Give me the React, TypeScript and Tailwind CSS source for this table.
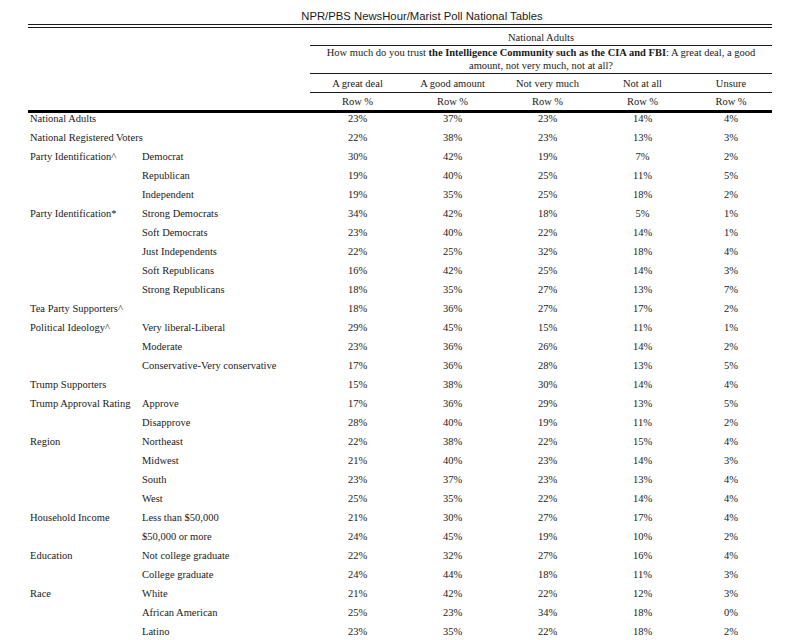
const cols = ["A great deal", "A good amount", "Not very much", "Not at all", "Unsure"];

const rows: [string, string, string[]][] = [
  ["National Adults", "", ["23%", "37%", "23%", "14%", "4%"]],
  ["National Registered Voters", "", ["22%", "38%", "23%", "13%", "3%"]],
  ["Party Identification^", "Democrat", ["30%", "42%", "19%", "7%", "2%"]],
  ["", "Republican", ["19%", "40%", "25%", "11%", "5%"]],
  ["", "Independent", ["19%", "35%", "25%", "18%", "2%"]],
  ["Party Identification*", "Strong Democrats", ["34%", "42%", "18%", "5%", "1%"]],
  ["", "Soft Democrats", ["23%", "40%", "22%", "14%", "1%"]],
  ["", "Just Independents", ["22%", "25%", "32%", "18%", "4%"]],
  ["", "Soft Republicans", ["16%", "42%", "25%", "14%", "3%"]],
  ["", "Strong Republicans", ["18%", "35%", "27%", "13%", "7%"]],
  ["Tea Party Supporters^", "", ["18%", "36%", "27%", "17%", "2%"]],
  ["Political Ideology^", "Very liberal-Liberal", ["29%", "45%", "15%", "11%", "1%"]],
  ["", "Moderate", ["23%", "36%", "26%", "14%", "2%"]],
  ["", "Conservative-Very conservative", ["17%", "36%", "28%", "13%", "5%"]],
  ["Trump Supporters", "", ["15%", "38%", "30%", "14%", "4%"]],
  ["Trump Approval Rating", "Approve", ["17%", "36%", "29%", "13%", "5%"]],
  ["", "Disapprove", ["28%", "40%", "19%", "11%", "2%"]],
  ["Region", "Northeast", ["22%", "38%", "22%", "15%", "4%"]],
  ["", "Midwest", ["21%", "40%", "23%", "14%", "3%"]],
  ["", "South", ["23%", "37%", "23%", "13%", "4%"]],
  ["", "West", ["25%", "35%", "22%", "14%", "4%"]],
  ["Household Income", "Less than $50,000", ["21%", "30%", "27%", "17%", "4%"]],
  ["", "$50,000 or more", ["24%", "45%", "19%", "10%", "2%"]],
  ["Education", "Not college graduate", ["22%", "32%", "27%", "16%", "4%"]],
  ["", "College graduate", ["24%", "44%", "18%", "11%", "3%"]],
  ["Race", "White", ["21%", "42%", "22%", "12%", "3%"]],
  ["", "African American", ["25%", "23%", "34%", "18%", "0%"]],
  ["", "Latino", ["23%", "35%", "22%", "18%", "2%"]],
];

export default function App() {
  return (
    <div className="w-[800px] h-[640px] overflow-hidden bg-white text-[#1a1a1a] px-[28px]">
      <div className="h-[24px] pt-[10px] pl-[44px] text-center text-[11.3px] leading-[13px] font-['Liberation_Sans',Arial,sans-serif]">
        NPR/PBS NewsHour/Marist Poll National Tables
      </div>
      <div className="h-[4px] border-y border-[#1a1a1a]" />

      <div className="grid grid-cols-[114px_168px_95px_95px_95px_95px_82px] font-['Liberation_Serif','Times_New_Roman',serif] text-[10.5px]">
        {/* header */}
        <div className="col-span-2" />
        <div className="col-span-5 h-[18px] border-b border-[#1a1a1a] pt-[3px] leading-[13px] text-center">
          National Adults
        </div>
        <div className="col-span-2" />
        <div className="col-span-5 h-[28px] border-b border-[#1a1a1a] leading-[13px] text-center px-[12px]">
          How much do you trust <b>the Intelligence Community such as the CIA and FBI</b>: A great deal, a good amount, not very much, not at all?
        </div>
        <div className="col-span-2" />
        {cols.map((c) => (
          <div key={c} className="h-[19px] border-b border-[#1a1a1a] pt-[3px] leading-[13px] text-center">
            {c}
          </div>
        ))}
        <div className="col-span-2" />
        {cols.map((c) => (
          <div key={c + "r"} className="h-[17px] pt-[2px] leading-[13px] text-center">
            Row %
          </div>
        ))}
        <div className="col-span-7 h-[3px] bg-black" />

        {/* body */}
        {rows.map(([group, sub, vals], i) => (
          <div key={i} className="contents">
            <div className="h-[19px] pl-[2px] leading-[12px] whitespace-nowrap">{group}</div>
            <div className="h-[19px] leading-[12px] whitespace-nowrap">{sub}</div>
            {vals.map((v, j) => (
              <div key={j} className="h-[19px] leading-[12px] text-center">
                {v}
              </div>
            ))}
          </div>
        ))}
      </div>
    </div>
  );
}
